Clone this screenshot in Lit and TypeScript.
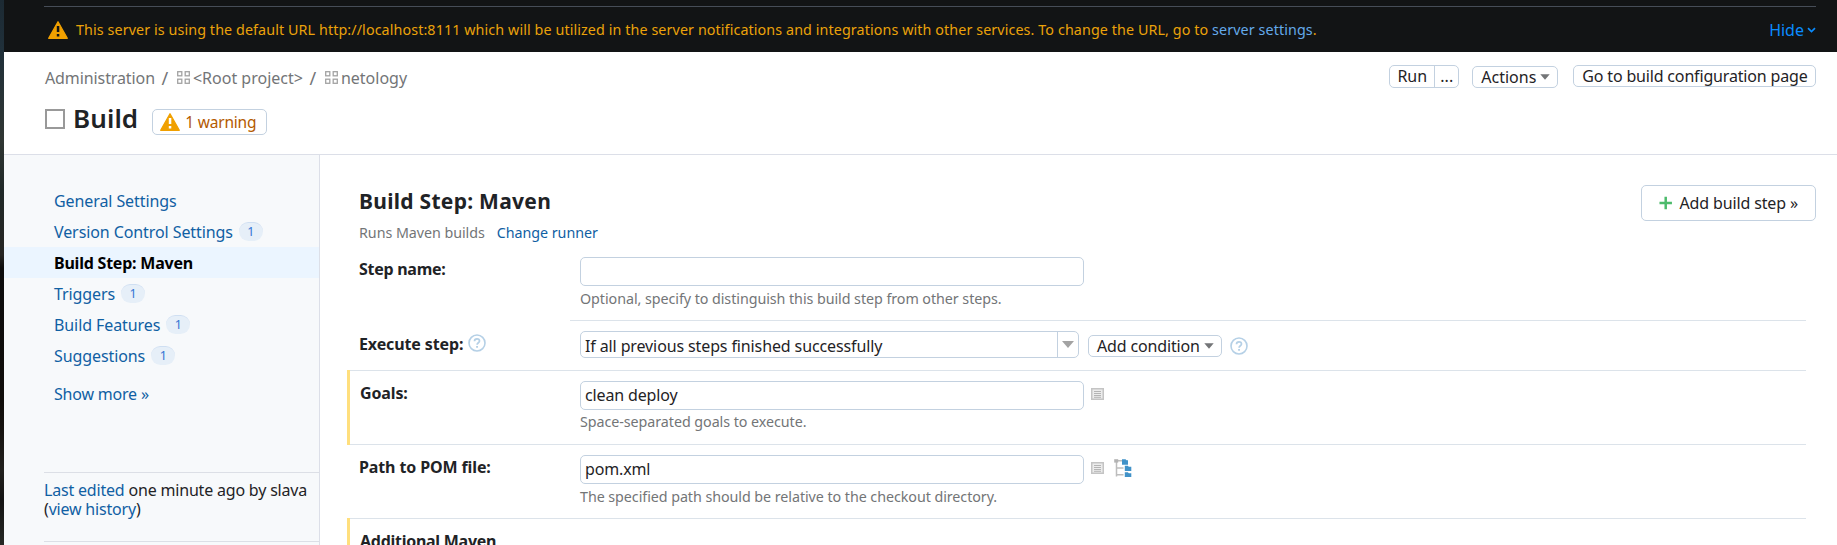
import { LitElement, html, svg, css, nothing } from "lit";
import { customElement, property } from "lit/decorators.js";
import { classMap } from "lit/directives/class-map.js";

const warningIcon = (mark: string) => html`<svg class="warn" width="20" height="18" viewBox="0 0 20 18">
  <path d="M10 .8 19.3 17.300H.7Z" fill="#f0a000" stroke="#f0a000" stroke-width="1.300" stroke-linejoin="round" />
  <path d="M8.800 5h2.500v6h-2.500zM8.800 13h2.500v2.400h-2.500z" fill=${mark} />
</svg>`;

const projectIcon = html`<svg class="project" width="13" height="13" viewBox="0 0 13 13" fill="none" stroke="#a3a3a3" stroke-width="1.3">
  ${[[0.7, 0.7], [8.2, 0.7], [0.7, 8.2], [8.2, 8.2]].map(([x, y]) => svg`<rect x=${x} y=${y} width="4.1" height="4.1" />`)}
</svg>`;

const helpIcon = html`<svg class="help" width="18" height="18" viewBox="0 0 18 18" fill="none" stroke="#b5d0e6">
  <circle cx="9" cy="9" r="8" stroke-width="1.6" />
  <path d="M6.5 7.2C6.5 5.6 7.5 4.8 9 4.8s2.5.9 2.5 2.2c0 1.7-2.4 1.8-2.4 3.7" stroke-width="1.7" />
  <path d="M8.1 12h1.9v1.8H8.1z" fill="#b5d0e6" stroke="none" />
</svg>`;

const listIcon = html`<svg class="list" width="13" height="12" viewBox="0 0 13 12">
  <rect x=".75" y=".75" width="11.5" height="10.5" fill="#ececec" stroke="#c4c4c4" stroke-width="1.5" />
  <path d="M3 3.5h7M3 5.5h7M3 7.5h7M3 9.3h7" stroke="#b4b4b4" />
</svg>`;

const treeIcon = html`<svg class="tree" width="18" height="18" viewBox="0 0 18 18">
  <path d="M2.5 3v14.500M2.5 9h7M2.5 15.800h7M3 1.8h5" stroke="#bdbdbd" stroke-width="1.5" fill="none" />
  <rect x=".2" y=".2" width="4" height="3.4" fill="#b3b3b3" />
  <path d="M8 .3h3.500l1 1H14v4.500H8zM10.800 6.700h3l1 1h2.500v4.300h-6.500zM10.800 13.200h3l1 1h2.500v3.800h-6.500z" fill="#4192c8" />
</svg>`;

const caret = html`<svg class="caret" width="10" height="6" viewBox="0 0 10 6"><path d="M.3 .3h9.400L5 5.700Z" fill="#737577" /></svg>`;

@customElement("server-banner")
class ServerBanner extends LitElement {
  static styles = css`
    :host { display: block; height: 52px; padding: 6px 21px 0 40px; box-sizing: border-box; background: #121415; }
    .line { display: flex; align-items: center; height: 45px; border-top: 1px solid #464d57; font-size: 14.3px; letter-spacing: 0.1px; line-height: 20px; color: #eba20a; white-space: nowrap; }
    .warn { margin: 0 8px 0 4px; }
    .message { flex: 1; }
    .link { color: #64aaea; }
    .hide { display: flex; align-items: center; gap: 3px; font-size: 16px; letter-spacing: 0; color: #0a8cff; }
  `;
  render() {
    return html`<div class="line">
      ${warningIcon("#121415")}
      <span class="message">This server is using the default URL http://localhost:8111 which will be utilized in the server notifications and integrations with other services. To change the URL, go to <a class="link">server settings</a>.</span>
      <a class="hide">Hide <svg width="9" height="6" viewBox="0 0 9 6"><path d="M1 1.200 4.500 4.600 8 1.200" fill="none" stroke="#0a8cff" stroke-width="1.700" /></svg></a>
    </div>`;
  }
}

@customElement("page-header")
class PageHeader extends LitElement {
  static styles = css`
    :host { display: flex; justify-content: space-between; height: 103px; padding: 0 21px 0 41px; box-sizing: border-box; border-bottom: 1px solid #dcdfe8; line-height: 20px; white-space: nowrap; }
    .crumbs { display: flex; align-items: center; height: 28px; margin-top: 12px; color: #737577; }
    .admin { letter-spacing: -0.1px; }
    .sep { margin: 0 8px 0 6px; font-size: 18px; width: 8px; text-align: center; }
    .sep + .project { margin: 0 3px 2px 0; }
    .title { display: flex; align-items: flex-start; margin-top: 17px; }
    .box { width: 16px; height: 16px; border: 2.500px solid #999; }
    .name { margin: -7px 14px 0 8px; font-size: 26px; font-weight: 600; line-height: 33px; letter-spacing: 0.1px; color: #1f2326; }
    .warning { display: flex; align-items: center; gap: 5px; height: 24px; padding: 0 10px 0 7px; border: 1px solid #c3d1e0; border-radius: 5px; font-size: 15.500px; letter-spacing: -0.2px; color: #b35a00; }
    .actions { display: flex; align-items: flex-start; padding-top: 13px; }
    .btn { display: flex; align-items: center; height: 20px; border: 1px solid #c3d1e0; border-radius: 5px; padding: 0 8px; }
    .run { margin-right: 13px; padding: 0; height: 21px; }
    .run-main { width: 44px; text-align: center; border-right: 1px solid #c3d1e0; line-height: 21px; }
    .run-more { width: 23px; text-align: center; line-height: 21px; }
    .menu { gap: 4px; margin: 1px 15px 0 0; padding-right: 7px; }
    .goto { letter-spacing: -0.170px; padding: 0 7.500px 0 8px; }
  `;
  render() {
    return html`<div>
        <div class="crumbs"><span class="admin">Administration</span><span class="sep">/</span>${projectIcon}<span>&lt;Root project&gt;</span><span class="sep">/</span>${projectIcon}<span>netology</span></div>
        <div class="title"><span class="box"></span><span class="name">Build</span><span class="warning">${warningIcon("#fff")}1 warning</span></div>
      </div>
      <div class="actions">
        <div class="btn run"><span class="run-main">Run</span><span class="run-more">...</span></div>
        <div class="btn menu">Actions${caret}</div>
        <div class="btn goto">Go to build configuration page</div>
      </div>`;
  }
}

const navItems = [
  { label: "General Settings" },
  { label: "Version Control Settings", count: 1 },
  { label: "Build Step: Maven", active: true },
  { label: "Triggers", count: 1 },
  { label: "Build Features", count: 1 },
  { label: "Suggestions", count: 1 },
];

@customElement("side-nav")
class SideNav extends LitElement {
  static styles = css`
    :host { display: flex; flex-direction: column; width: 316px; flex: none; box-sizing: border-box; padding-top: 30px; border-right: 1px solid #dcdfe8; background: #f7f9fb; color: #1f2326; white-space: nowrap; }
    .item { display: flex; align-items: center; height: 31px; padding-left: 50px; color: #1060a3; letter-spacing: -0.090px; }
    .active { background: #ebf5ff; color: #000; font-weight: 700; letter-spacing: -0.220px; }
    .more { margin-top: 7px; letter-spacing: -0.200px; }
    .count { width: 24px; height: 18px; margin-left: 6px; border-top: 1px solid #cfdff2; border-radius: 10px; background: #e6eff8; color: #3474d4; font-size: 12.500px; line-height: 18px; text-align: center; }
    .edited { height: 60px; margin: 63px 0 0 40px; padding-top: 8px; border: solid #dcdfe6; border-width: 1px 0; line-height: 19px; letter-spacing: -0.190px; }
    .link { color: #1060a3; }
  `;
  render() {
    return html`${navItems.map((i) => html`<a class=${classMap({ item: true, active: !!i.active })}>${i.label}${i.count ? html`<span class="count">${i.count}</span>` : nothing}</a>`)}
      <a class="item more">Show more »</a>
      <div class="edited"><a class="link">Last edited</a> one minute ago by slava<br />(<a class="link">view history</a>)</div>`;
  }
}

@customElement("setting-row")
class SettingRow extends LitElement {
  @property() label = "";
  @property() hint = "";
  @property({ type: Boolean }) changed = false;
  @property({ type: Boolean }) help = false;
  static styles = css`
    :host { display: flex; height: 74px; flex: none; }
    :host([compact]) { height: 50px; }
    .bar { width: 3px; margin-bottom: -1px; flex: none; }
    .changed { background: #ffdf7d; }
    .label { display: flex; width: 220px; box-sizing: border-box; padding: 11px 0 0 9px; border-top: 1px solid #dce3ea; font-weight: 700; line-height: 22px; letter-spacing: -0.120px; color: #1f2326; white-space: nowrap; }
    :host([tight]) .label { letter-spacing: -0.270px; }
    :host([changed]) .label { padding-left: 10px; }
    :host([compact]) .label { padding-top: 12px; }
    .help { margin: 1px 0 0 5px; }
    .value { flex: 1; padding: 10px 0 0 10px; border-top: 1px solid #dce3ea; }
    :host([line="none"]) .value, :host([line="none"]) .label, :host([line="value"]) .label { border-top-color: transparent; }
    .controls { display: flex; align-items: flex-start; }
    .hint { margin-top: 4px; font-size: 14.300px; line-height: 17px; letter-spacing: -0.060px; color: #737577; }
    :host([close]) .hint { margin-top: 3px; }
  `;
  render() {
    return html`<div class=${classMap({ bar: true, changed: this.changed })}></div>
      <div class="label">${this.label}${this.help ? helpIcon : nothing}</div>
      <div class="value"><div class="controls"><slot></slot></div>${this.hint ? html`<div class="hint">${this.hint}</div>` : nothing}</div>`;
  }
}

@customElement("step-editor")
class StepEditor extends LitElement {
  static styles = css`
    :host { display: block; flex: 1; min-width: 0; padding: 30px 31px 0 27px; color: #1f2326; white-space: nowrap; }
    .top { display: flex; justify-content: space-between; align-items: flex-start; height: 61px; margin: 0 -10px 0 12px; }
    .heading { margin: 1px 0 7px; font-size: 21px; line-height: 30px; font-weight: 700; letter-spacing: 0.280px; }
    .sub { display: flex; gap: 12px; font-size: 14.300px; line-height: 19px; letter-spacing: -0.050px; color: #737577; }
    .link { color: #1060a3; }
    .add { display: flex; align-items: center; gap: 7px; width: 139px; height: 34px; padding: 0 17px; border: 1px solid #c3d1e0; border-radius: 5px; line-height: 32px; letter-spacing: -0.130px; }
    .field { width: 504px; height: 29px; box-sizing: border-box; border: 1px solid #c3d1e0; border-radius: 5px; padding: 0 4px; line-height: 27px; letter-spacing: -0.140px; }
    .select { display: flex; width: 499px; height: 27px; box-sizing: border-box; border: 1px solid #c3d1e0; border-radius: 5px; line-height: 28px; letter-spacing: -0.120px; }
    .chosen { flex: 1; padding-left: 4px; }
    .arrow { display: flex; align-items: center; justify-content: center; width: 20px; border-left: 1px solid #c3d1e0; }
    .condition { display: flex; align-items: center; gap: 4px; height: 20px; margin: 4px 8px 0 9px; padding: 0 7px 0 8px; border: 1px solid #c3d1e0; border-radius: 5px; letter-spacing: -0.150px; line-height: 20px; }
    .help { margin-top: 6px; }
    .list { margin: 7px 0 0 7px; }
    .tree { margin: 4px 0 0 10px; }
  `;
  render() {
    return html`<div class="top">
        <div>
          <div class="heading">Build Step: Maven</div>
          <div class="sub"><span>Runs Maven builds</span><a class="link">Change runner</a></div>
        </div>
        <div class="add"><svg width="14" height="14" viewBox="0 0 14 14"><path d="M7 .5v13M.5 7h13" stroke="#4dbb6c" stroke-width="2.600" /></svg>Add build step »</div>
      </div>
      <setting-row label="Step name:" line="none" tight hint="Optional, specify to distinguish this build step from other steps."><div class="field"></div></setting-row>
      <setting-row label="Execute step:" line="value" compact help>
        <div class="select"><span class="chosen">If all previous steps finished successfully</span><span class="arrow"><svg width="12" height="7" viewBox="0 0 12 7"><path d="M0 0h12L6 7Z" fill="#a3a3a3" /></svg></span></div>
        <div class="condition">Add condition${caret}</div>${helpIcon}
      </setting-row>
      <setting-row label="Goals:" changed close hint="Space-separated goals to execute."><div class="field">clean deploy</div>${listIcon}</setting-row>
      <setting-row label="Path to POM file:" hint="The specified path should be relative to the checkout directory."><div class="field">pom.xml</div>${listIcon}${treeIcon}</setting-row>
      <setting-row label="Additional Maven" changed tight></setting-row>`;
  }
}

@customElement("app-root")
class AppRoot extends LitElement {
  static styles = css`
    :host { display: flex; height: 545px; overflow: hidden; background: #fff; font: 16px/20px "Noto Sans", sans-serif; color: #1f2326; }
    .desktop { width: 4px; flex: none; background: linear-gradient(#1c2a33 0, #20303a 50px, #303633 140px, #202928 190px, #262523 255px, #0c0c0d 268px, #100d0a 400px, #161310 430px, #22211e 470px, #141414 500px, #262824 545px); }
    .window { flex: 1; min-width: 0; display: flex; flex-direction: column; }
    .body { flex: 1; min-height: 0; display: flex; }
  `;
  render() {
    return html`<div class="desktop"></div>
      <div class="window">
        <server-banner></server-banner>
        <page-header></page-header>
        <div class="body"><side-nav></side-nav><step-editor></step-editor></div>
      </div>`;
  }
}
